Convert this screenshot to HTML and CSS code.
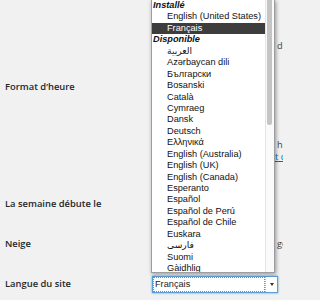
FILE: index.html
```html
<!DOCTYPE html>
<html lang="fr">
<head>
<meta charset="utf-8">
<title>Réglages généraux</title>
<link rel="stylesheet" href="styles.css">
</head>
<body>
<div class="form">
  <div class="row row-date">
    <div class="label"></div>
    <div class="field"></div>
    <div class="extra"><span class="code">d F Y</span></div>
  </div>
  <div class="row row-time">
    <div class="label">Format d’heure</div>
    <div class="field"></div>
    <div class="extra">
      <div class="code">h i</div>
      <a class="link" href="#">t complet</a>
    </div>
  </div>
  <div class="row row-week">
    <div class="label">La semaine débute le</div>
    <div class="field"></div>
    <div class="extra"></div>
  </div>
  <div class="row row-snow">
    <div class="label">Neige</div>
    <div class="field"></div>
    <div class="extra">ge</div>
  </div>
  <div class="row row-lang">
    <div class="label">Langue du site</div>
    <div class="select">
      <span class="value">Français</span>
      <span class="arrow"></span>
    </div>
  </div>
</div>

<div class="popup">
  <div class="options">
    <div class="group">Installé</div>
    <div class="opt">English (United States)</div>
    <div class="opt sel">Français</div>
    <div class="group">Disponible</div>
    <div class="opt">العربية</div>
    <div class="opt">Azərbaycan dili</div>
    <div class="opt">Български</div>
    <div class="opt">Bosanski</div>
    <div class="opt">Català</div>
    <div class="opt">Cymraeg</div>
    <div class="opt">Dansk</div>
    <div class="opt">Deutsch</div>
    <div class="opt">Ελληνικά</div>
    <div class="opt">English (Australia)</div>
    <div class="opt">English (UK)</div>
    <div class="opt">English (Canada)</div>
    <div class="opt">Esperanto</div>
    <div class="opt">Español</div>
    <div class="opt">Español de Perú</div>
    <div class="opt">Español de Chile</div>
    <div class="opt">Euskara</div>
    <div class="opt">فارسی</div>
    <div class="opt">Suomi</div>
    <div class="opt">Gàidhlig</div>
  </div>
  <div class="scrollbar"><div class="thumb"></div></div>
</div>
</body>
</html>
```

FILE: styles.css
```css
html, body {
  margin: 0;
  padding: 0;
}

body {
  position: relative;
  width: 283px;
  height: 300px;
  overflow: hidden;
  background: #f1f1f1;
  font-family: "Open Sans", "Noto Sans", sans-serif;
  font-size: 9.2px;
  line-height: 12px;
  color: #23282d;
}

.row {
  display: grid;
  grid-template-columns: 152px 124px 1fr;
  box-sizing: border-box;
}

.label {
  padding-left: 5px;
  font-size: 9.4px;
  font-weight: 600;
  white-space: nowrap;
}

.extra {
  white-space: nowrap;
  color: #444;
  padding-left: 1px;
}

.link {
  display: block;
  margin-left: -2px;
  color: #0073aa;
  text-decoration: underline;
}

.row-date { height: 66px; }
.row-date .extra { padding-top: 40px; }

.row-time { height: 114px; }
.row-time .label { padding-top: 15px; }
.row-time .extra { padding-top: 73px; }

.row-week { height: 45px; }
.row-week .label { padding-top: 18px; }

.row-snow { height: 41px; }
.row-snow .label,
.row-snow .extra { padding-top: 13px; }

.row-lang .label { padding-top: 12px; }

.select {
  grid-column: 2 / 4;
  width: 126px;
  height: 17px;
  margin-top: 10px;
  box-sizing: border-box;
  display: flex;
  background: #fff;
  border: 1px solid #5b9dd9;
  box-shadow: 0 0 2px rgba(30, 140, 190, 0.8);
  font-family: "Liberation Sans", Arial, sans-serif;
  font-size: 9.2px;
  color: #222;
}

.select .value {
  flex: 1;
  border: 1px dotted #8a8a8a;
  padding-left: 1px;
  line-height: 13px;
}

.select .arrow {
  width: 12px;
  flex: none;
  box-sizing: border-box;
  border-left: 1px dotted #b5b5b5;
  display: flex;
  align-items: center;
  justify-content: center;
}

.select .arrow::after {
  content: "";
  width: 0;
  height: 0;
  border-left: 2.5px solid transparent;
  border-right: 2.5px solid transparent;
  border-top: 3px solid #333;
}

.popup {
  position: absolute;
  left: 151px;
  top: 0;
  width: 122px;
  height: 272px;
  display: flex;
  background: #fff;
  border: 1px solid #9d9d9d;
  border-top: none;
  box-shadow: 1px 1px 4px rgba(0, 0, 0, 0.4);
}

.options {
  flex: 1;
  overflow: hidden;
  font-family: "Liberation Sans", Arial, "DejaVu Sans", sans-serif;
  font-size: 9.2px;
  line-height: 11.45px;
  color: #111;
}

.options > div {
  height: 11.45px;
  white-space: nowrap;
}

.group {
  padding-left: 1px;
  font-weight: bold;
  font-style: italic;
}

.opt {
  padding-left: 15px;
}

.opt.sel {
  background: #3d3d3d;
  color: #fff;
}

.scrollbar {
  width: 8px;
  flex: none;
  background: #fafafa;
  border-left: 1px solid #e4e4e4;
}

.thumb {
  width: 5px;
  height: 129px;
  margin-top: -4px;
  margin-left: 1px;
  border-radius: 3px;
  background: #c4c4c4;
}
```
